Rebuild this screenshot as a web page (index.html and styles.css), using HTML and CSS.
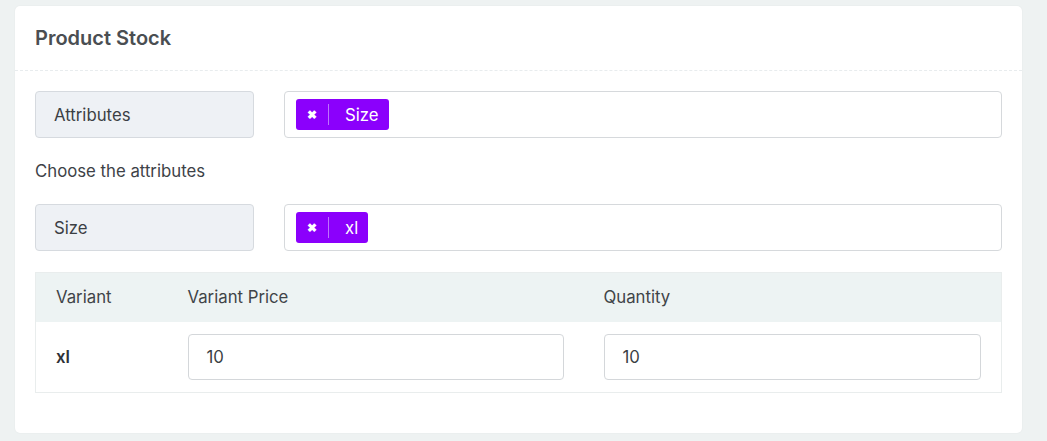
FILE: index.html
```html
<!DOCTYPE html>
<html>
<head>
<meta charset="utf-8">
<link rel="stylesheet" href="styles.css">
</head>
<body>
<div class="card">
  <div class="card-header">Product Stock</div>
  <div class="card-body">
    <div class="row">
      <div class="label-box">Attributes</div>
      <div class="select-box">
        <span class="chip"><span class="chip-x">&#x2716;</span><span class="chip-text">Size</span></span>
      </div>
    </div>
    <p class="hint">Choose the attributes</p>
    <div class="row">
      <div class="label-box">Size</div>
      <div class="select-box">
        <span class="chip"><span class="chip-x">&#x2716;</span><span class="chip-text">xl</span></span>
      </div>
    </div>
    <table class="variants">
      <thead>
        <tr><th class="c1">Variant</th><th class="c2">Variant Price</th><th class="c3">Quantity</th></tr>
      </thead>
      <tbody>
        <tr>
          <td class="vname">xl</td>
          <td><div class="input">10</div></td>
          <td><div class="input">10</div></td>
        </tr>
      </tbody>
    </table>
  </div>
</div>
</body>
</html>
```
FILE: styles.css
```css
html, body { margin: 0; padding: 0; }
body {
  background: #eef2f2;
  font-family: Inter, "Noto Sans", sans-serif;
  color: #353a40;
  font-size: 16.75px;
  padding: 6px 25px 8px 15px;
}
.card {
  background: #fff;
  border-radius: 5px;
  box-shadow: 0 0 2px rgba(0,0,0,0.06);
  height: 427px;
  box-sizing: border-box;
}
.card-header {
  height: 65px;
  box-sizing: border-box;
  padding: 20px 20px 0;
  font-size: 20px;
  font-weight: 600;
  color: #4a4e52;
  line-height: 24px;
  border-bottom: 1px dashed #e8ecee;
}
.card-body {
  padding: 20px 20px 0;
}
.row {
  display: flex;
  gap: 30px;
}
.label-box {
  width: 219px;
  height: 47px;
  box-sizing: border-box;
  background: #eef1f5;
  border: 1px solid #d6dadf;
  border-radius: 4px;
  padding: 0 18px;
  display: flex;
  align-items: center;
  color: #3b3f44;
}
.select-box {
  flex: 1;
  height: 47px;
  box-sizing: border-box;
  border: 1px solid #d6d9dc;
  border-radius: 4px;
  display: flex;
  align-items: center;
  padding: 0 11px;
}
.chip {
  display: inline-flex;
  align-items: center;
  background: #8b00fc;
  color: #fff;
  border-radius: 3px;
  height: 31px;
  padding: 0 10px 0 0;
}
.chip-x {
  font-size: 12px;
  font-weight: 700;
  width: 32px;
  text-align: center;
  border-right: 1px solid rgba(255,255,255,0.45);
  height: 21px;
  line-height: 21px;
}
.chip-text {
  padding-left: 16px;
}
.hint {
  margin: 0;
  height: 66px;
  line-height: 66px;
  color: #3d4247;
}
.variants {
  margin-top: 21px;
  width: 100%;
  border-collapse: collapse;
  border: 1px solid #e9eded;
}
.variants th {
  background: #edf3f3;
  font-weight: 400;
  text-align: left;
  height: 49px;
  box-sizing: border-box;
  line-height: 20px;
  padding: 0 20px;
  color: #3f4448;
}
.variants th.c1 { width: 132px; }
.variants th.c2 { width: 416px; }
.variants td {
  padding: 12px 20px 12px;
}
.vname { font-weight: 600; color: #2e3236; }
.input {
  height: 46px;
  box-sizing: border-box;
  border: 1px solid #d4d7da;
  border-radius: 4px;
  display: flex;
  align-items: center;
  padding: 0 18px;
  color: #3b3f44;
}
```
